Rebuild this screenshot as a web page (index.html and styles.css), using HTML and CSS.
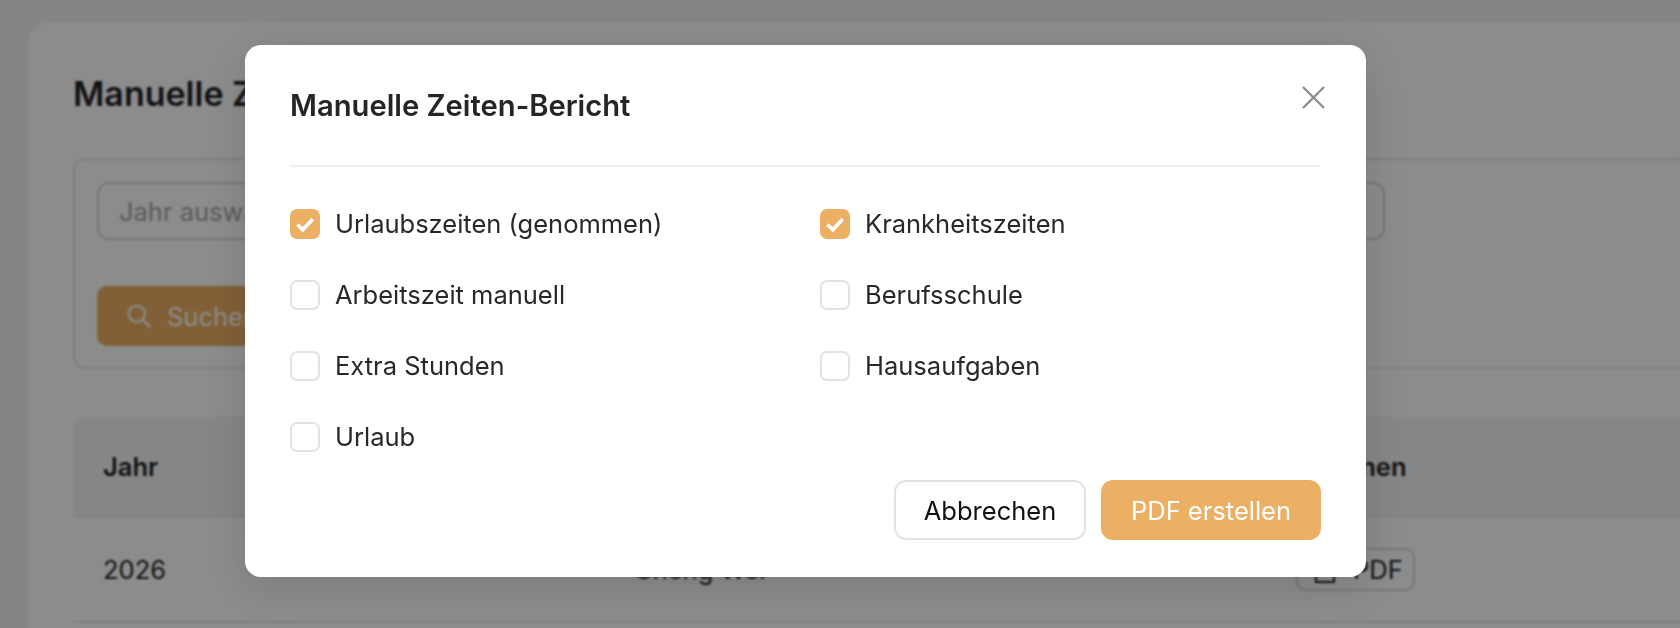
FILE: index.html
```html
<!DOCTYPE html>
<html lang="de">
<head>
    <title>Manuelle Zeiten-Bericht</title>
    <meta charset="utf-8" />
    <link rel="stylesheet" href="styles.css">
</head>
<body>

    <div class="pageCard">
        <h1 class="pageTitle">Manuelle Zeiten</h1>

        <div class="filterBox">
            <div class="yearInput">Jahr auswählen</div>
            <div class="searchBtn">
                <svg class="searchIcon" viewBox="0 0 24 24" fill="none" stroke="currentColor" stroke-width="2" stroke-linecap="round">
                    <circle cx="10" cy="10" r="7.5" />
                    <path d="M15.8 15.8L22 22" />
                </svg>
                Suchen
            </div>
        </div>

        <div class="tableHead">
            <div>Jahr</div>
            <div>Name</div>
            <div>Aktionen</div>
        </div>
        <div class="tableRow">
            <div>2026</div>
            <div>Cheng Wei</div>
            <div>
                <span class="pdfBtn">
                    <svg class="pdfIcon" viewBox="0 0 20 28" fill="none" stroke="currentColor" stroke-width="2">
                        <path d="M1 1H19V27H1Z" />
                    </svg>
                    PDF
                </span>
            </div>
        </div>
    </div>

    <!-- Dialog -->
    <div class="overlay">
        <div class="modal">
            <div class="modalHead">
                <h2 class="modalTitle">Manuelle Zeiten-Bericht</h2>
                <svg class="closeIcon" viewBox="0 0 24 24" fill="none" stroke="currentColor" stroke-width="2.4">
                    <path d="M1 1L23 23M23 1L1 23" />
                </svg>
            </div>

            <div class="optionGrid">
                <label class="option"><span class="box checked"><svg viewBox="0 0 30 30" fill="none" stroke="#FFFFFF" stroke-width="3.6"><path d="M7.5 15.5L12.8 20.8L22.8 10" /></svg></span>Urlaubszeiten (genommen)</label>
                <label class="option"><span class="box checked"><svg viewBox="0 0 30 30" fill="none" stroke="#FFFFFF" stroke-width="3.6"><path d="M7.5 15.5L12.8 20.8L22.8 10" /></svg></span>Krankheitszeiten</label>
                <label class="option"><span class="box"></span>Arbeitszeit manuell</label>
                <label class="option"><span class="box"></span>Berufsschule</label>
                <label class="option"><span class="box"></span>Extra Stunden</label>
                <label class="option"><span class="box"></span>Hausaufgaben</label>
                <label class="option"><span class="box"></span>Urlaub</label>
            </div>

            <div class="modalFoot">
                <div class="btn btnCancel">Abbrechen</div>
                <div class="btn btnCreate">PDF erstellen</div>
            </div>
        </div>
    </div>

</body>
</html>
```

FILE: styles.css
```css
* {
    box-sizing: border-box;
}

html, body {
    height: 100%;
}

body {
    margin: 0;
    overflow: hidden;
    background-color: #F3F3F3;
    font-family: Inter, "Liberation Sans", sans-serif;
    font-size: 25.5px;
    color: #1F2225;
}

/* page behind the dialog */
.pageCard {
    width: 1720px;
    height: 605px;
    margin: 23px 0 0 28px;
    padding: 47px 45px 0 45px;
    background-color: #FFFFFF;
    border-radius: 20px 20px 0 0;
}

.pageTitle {
    margin: 0;
    font-size: 34px;
    line-height: 48px;
    font-weight: 600;
    white-space: nowrap;
}

.filterBox {
    height: 211px;
    margin-top: 40px;
    padding: 22px 22px;
    border: 2px solid #E8E8E8;
    border-radius: 12px;
}

.yearInput {
    display: flex;
    align-items: center;
    width: 1288px;
    height: 58px;
    padding-left: 20px;
    border: 2px solid #D9D9D9;
    border-radius: 12px;
    color: #A6A6A6;
}

.searchBtn {
    display: flex;
    align-items: center;
    gap: 15px;
    width: 240px;
    height: 60px;
    margin-top: 46px;
    padding-left: 29px;
    background-color: #ECB064;
    border-radius: 10px;
    color: #FFFFFF;
}

.searchIcon {
    width: 26px;
    height: 26px;
}

.tableHead, .tableRow {
    display: grid;
    grid-template-columns: 531px 662px 1fr;
    align-items: center;
    padding-left: 30px;
}

.tableHead {
    height: 100px;
    margin-top: 48px;
    background-color: #F5F5F5;
    border-bottom: 2px solid #EBEBEB;
    border-radius: 12px 12px 0 0;
    font-weight: 600;
}

.tableRow {
    height: 106px;
    border-bottom: 2px solid #EBEBEB;
}

.pdfBtn {
    display: inline-flex;
    align-items: center;
    gap: 18px;
    width: 119px;
    height: 43px;
    padding-left: 17px;
    border: 2px solid #D9D9D9;
    border-radius: 10px;
}

.pdfIcon {
    width: 20px;
    height: 28px;
}

/* dialog */
.overlay {
    position: fixed;
    top: 0;
    left: 0;
    right: 0;
    bottom: 0;
    padding: 45px 0 0 245px;
    background-color: rgba(0, 0, 0, .45);
    backdrop-filter: blur(1px);
}

.modal {
    width: 1121px;
    height: 532px;
    padding: 0 45px;
    background-color: #FFFFFF;
    border-radius: 16px;
    box-shadow: 0 10px 50px rgba(0, 0, 0, .14);
}

.modalHead {
    position: relative;
    height: 122px;
    padding-top: 42px;
    border-bottom: 2px solid #F0F0F0;
}

.modalTitle {
    margin: 0;
    font-size: 29.2px;
    line-height: 37px;
    font-weight: 600;
    color: #232528;
}

.closeIcon {
    position: absolute;
    top: 41px;
    right: -4px;
    width: 23px;
    height: 23px;
    color: #8C8C8C;
}

.optionGrid {
    display: grid;
    grid-template-columns: 530px 1fr;
    grid-auto-rows: 30px;
    row-gap: 41px;
    margin-top: 42px;
}

.option {
    display: flex;
    align-items: center;
    gap: 15px;
    line-height: 32px;
    color: #26282B;
}

.box {
    flex: none;
    width: 30px;
    height: 30px;
    border: 2px solid #E3E3E3;
    border-radius: 7px;
}

.box svg {
    display: block;
    width: 30px;
    height: 30px;
}

.box.checked {
    border: none;
    background-color: #ECB064;
}

.modalFoot {
    display: flex;
    justify-content: flex-end;
    gap: 15px;
    margin-top: 28px;
}

.btn {
    display: flex;
    align-items: center;
    justify-content: center;
    height: 60px;
    border-radius: 12px;
}

.btnCancel {
    width: 192px;
    border: 2px solid #E3E3E3;
    color: #111111;
}

.btnCreate {
    width: 220px;
    background-color: #ECB064;
    color: #FFFFFF;
}
```
